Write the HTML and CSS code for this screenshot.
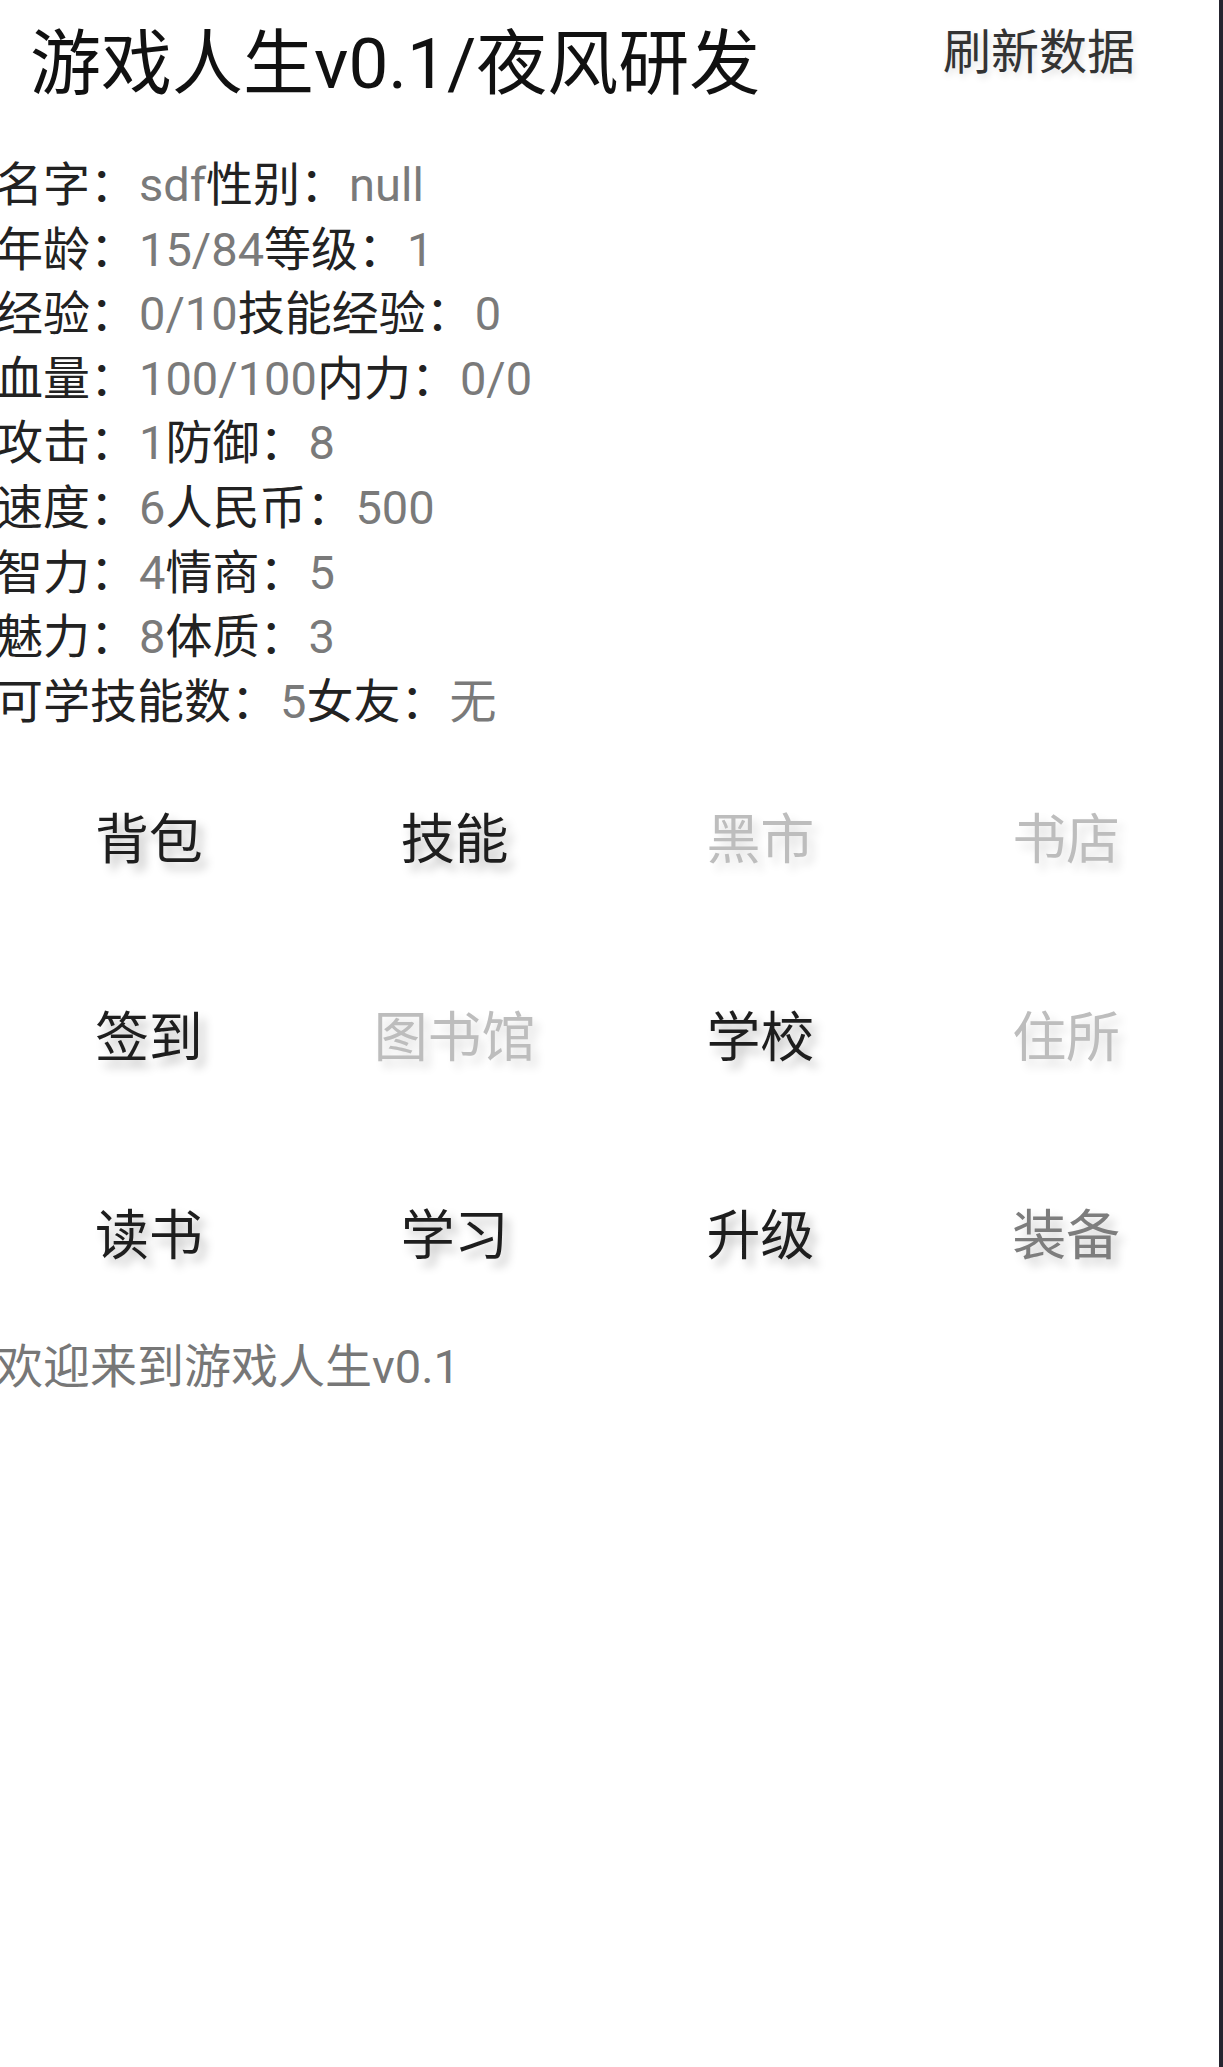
FILE: index.html
```html
<!DOCTYPE html>
<html lang="zh-CN">
<head>
<meta charset="utf-8">
<title>游戏人生v0.1</title>
<link rel="stylesheet" href="styles.css">
</head>
<body>
<div class="page">
  <header class="header">
    <h1 class="title">游戏人生v0.1/夜风研发</h1>
    <div class="refresh">刷新数据</div>
  </header>
  <section class="stats">
    <div class="line">名字：<span class="val">sdf</span>性别：<span class="val">null</span></div>
    <div class="line">年龄：<span class="val">15/84</span>等级：<span class="val">1</span></div>
    <div class="line">经验：<span class="val">0/10</span>技能经验：<span class="val">0</span></div>
    <div class="line">血量：<span class="val">100/100</span>内力：<span class="val">0/0</span></div>
    <div class="line">攻击：<span class="val">1</span>防御：<span class="val">8</span></div>
    <div class="line">速度：<span class="val">6</span>人民币：<span class="val">500</span></div>
    <div class="line">智力：<span class="val">4</span>情商：<span class="val">5</span></div>
    <div class="line">魅力：<span class="val">8</span>体质：<span class="val">3</span></div>
    <div class="line">可学技能数：<span class="val">5</span>女友：<span class="val">无</span></div>
  </section>
  <section class="grid">
    <div class="btn">背包</div>
    <div class="btn">技能</div>
    <div class="btn off">黑市</div>
    <div class="btn off">书店</div>
    <div class="btn">签到</div>
    <div class="btn off">图书馆</div>
    <div class="btn">学校</div>
    <div class="btn off">住所</div>
    <div class="btn">读书</div>
    <div class="btn">学习</div>
    <div class="btn">升级</div>
    <div class="btn mid">装备</div>
  </section>
  <p class="welcome">欢迎来到游戏人生v0.1</p>
</div>
</body>
</html>
```
FILE: styles.css
```css
html, body {
  margin: 0;
  padding: 0;
  background: #fff;
}
body {
  width: 1223px;
  height: 2067px;
  box-sizing: border-box;
  border-right: 4px solid #25242f;
  overflow: hidden;
  font-family: Roboto, "Noto Sans CJK SC", sans-serif;
  color: #1f1f1f;
}
.page {
  margin-left: -4px;
  width: 1223px;
}
.header {
  display: flex;
  align-items: flex-start;
}
.title {
  margin: 22px 0 0 34px;
  font-size: 71px;
  line-height: 84px;
  font-weight: 400;
  color: #111;
}
.refresh {
  margin: 25px 84px 0 auto;
  font-size: 48px;
  line-height: 56px;
  color: #333;
  text-shadow: 2px 4px 7px rgba(0,0,0,0.12);
}
.stats {
  margin-top: 47px;
  font-size: 47px;
  line-height: 64.6px;
  color: #222;
}
.line {
  white-space: nowrap;
}
.val {
  color: #7a7a7a;
  margin-left: 2px;
}
.grid {
  margin-top: 2px;
  display: grid;
  grid-template-columns: repeat(4, 1fr);
  grid-auto-rows: 198px;
}
.btn {
  display: flex;
  align-items: center;
  justify-content: center;
  font-size: 54px;
  color: #1e1e1e;
  text-shadow: 6px 7px 10px rgba(0,0,0,0.25);
}
.btn.off {
  color: #bdbdbd;
  text-shadow: 6px 7px 10px rgba(0,0,0,0.13);
}
.btn.mid {
  color: #7d7d7d;
  text-shadow: 6px 7px 10px rgba(0,0,0,0.18);
}
.welcome {
  margin: 5px 0 0;
  font-size: 47px;
  line-height: 64px;
  color: #777;
  white-space: nowrap;
}
```
